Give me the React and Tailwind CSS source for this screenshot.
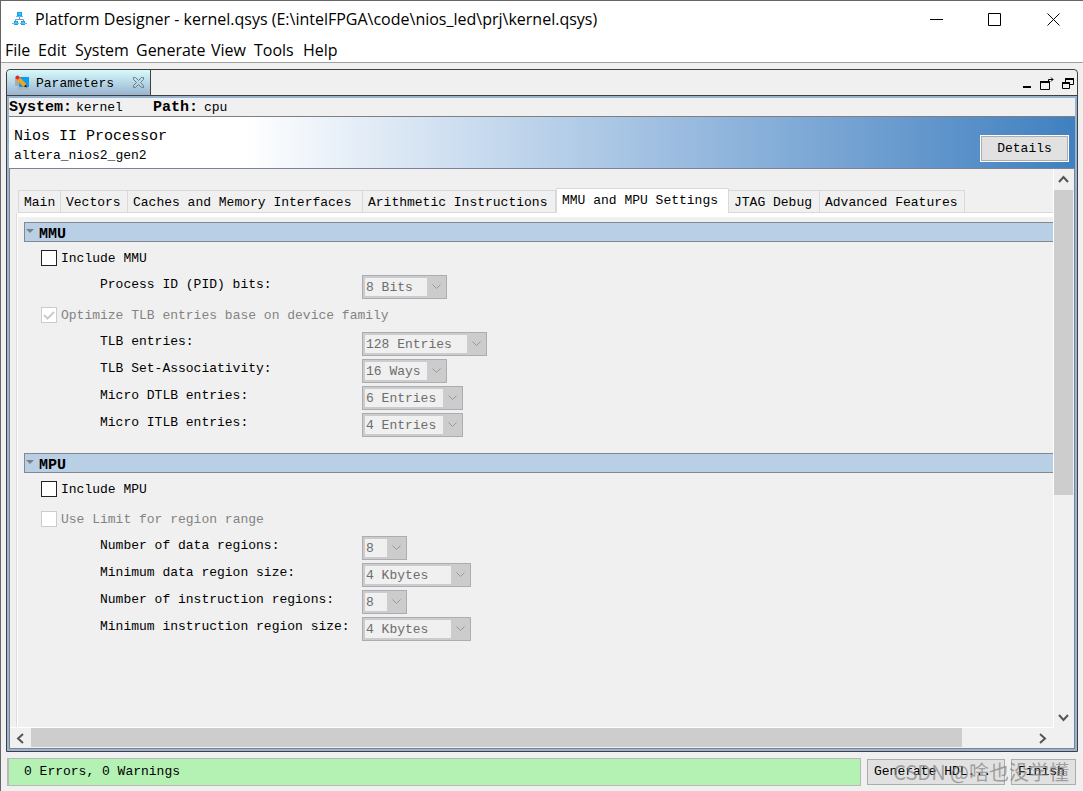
import React, { useState } from 'react';

const MENUS = [
    { name: 'File', width: 'w-[33px]' },
    { name: 'Edit', width: 'w-[37px]' },
    { name: 'System', width: 'w-[61px]' },
    { name: 'Generate', width: 'w-[75px]' },
    { name: 'View', width: 'w-[43px]' },
    { name: 'Tools', width: 'w-[49px]' },
    { name: 'Help', width: 'w-[40px]' },
];

const TABS = [
    { name: 'Main', width: 'w-[43px]' },
    { name: 'Vectors', width: 'w-[67px]' },
    { name: 'Caches and Memory Interfaces', width: 'w-[235px]' },
    { name: 'Arithmetic Instructions', width: 'w-[193px]' },
    { name: 'MMU and MPU Settings', width: 'w-[173px]' },
    { name: 'JTAG Debug', width: 'w-[91px]' },
    { name: 'Advanced Features', width: 'w-[145px]' },
];

const MMU_PID = [
    { id: 'pid', label: 'Process ID (PID) bits:', value: '8 Bits', width: 'w-[85px]' },
];

const MMU_TLB = [
    { id: 'tlb', label: 'TLB entries:', value: '128 Entries', width: 'w-[125px]' },
    { id: 'tlbWays', label: 'TLB Set-Associativity:', value: '16 Ways', width: 'w-[85px]' },
    { id: 'dtlb', label: 'Micro DTLB entries:', value: '6 Entries', width: 'w-[101px]' },
    { id: 'itlb', label: 'Micro ITLB entries:', value: '4 Entries', width: 'w-[101px]' },
];

const MPU_REGIONS = [
    { id: 'dataRegions', label: 'Number of data regions:', value: '8', width: 'w-[45px]' },
    { id: 'dataSize', label: 'Minimum data region size:', value: '4 Kbytes', width: 'w-[109px]' },
    { id: 'instRegions', label: 'Number of instruction regions:', value: '8', width: 'w-[45px]' },
    { id: 'instSize', label: 'Minimum instruction region size:', value: '4 Kbytes', width: 'w-[109px]' },
];

function AppIcon() {
    return (
        <svg width="15" height="14" viewBox="0 0 15 14" aria-hidden="true">
            <path d="M7.5 5v3M3.500 10V7.500h8v2.500" fill="none" stroke="#7c97b8" strokeWidth="1" />
            <rect x="5" y="0" width="5" height="4" fill="#0fa5ee" />
            <rect x="2" y="9" width="4" height="4" fill="#0fa5ee" />
            <rect x="9" y="9" width="4" height="4" fill="#0fa5ee" />
            <path d="M4 4.500h7M0 11.500h7M8 11.500h7" stroke="#5cbcf0" />
            <path d="M6.500 1.500h2v1h-2zM3.500 10h1v1h-1zM10.500 10h1v1h-1z" fill="#a5e2ff" />
        </svg>
    );
}

function ParametersIcon() {
    return (
        <svg width="15" height="16" viewBox="0 0 15 16" aria-hidden="true">
            <rect x="0" y="2" width="6" height="9" fill="#a9adb3" />
            <rect x="4" y="2" width="10" height="10" fill="#0b9cf2" />
            <rect x="2" y="12" width="12" height="3" fill="#b3b3b3" />
            <path d="M3 3.500l7 7" stroke="#f5a31a" strokeWidth="4" />
            <path d="M9 11.500l3 1-1-3z" fill="#222" />
            <circle cx="2.500" cy="2.500" r="2" fill="#e8272c" />
        </svg>
    );
}

function CloseTabIcon() {
    return (
        <svg width="11" height="11" viewBox="0 0 11 11" fill="none" stroke="#6d7c88" aria-hidden="true">
            <path d="M.5.5h2l3 3 3-3h2v2l-3 3 3 3v2h-2l-3-3-3 3h-2v-2l3-3-3-3z" />
        </svg>
    );
}

function Chevron({ dir, className }) {
    const paths = {
        up: 'M1 8l4.500-5L10 8',
        down: 'M1 3l4.500 5L10 3',
        left: 'M8 1L3 5.500 8 10',
        right: 'M3 1l5 4.500L3 10',
    };
    return (
        <svg width="11" height="11" viewBox="0 0 11 11" fill="none" stroke="currentColor" strokeWidth="2" className={className} aria-hidden="true">
            <path d={paths[dir]} />
        </svg>
    );
}

function TitleBar() {
    return (
        <div className="flex h-9 items-center bg-white pl-[11px] font-['Open_Sans','Noto_Sans',sans-serif] text-black">
            <AppIcon />
            <h1 className="ml-2 flex-1 whitespace-nowrap text-[16px]">
                Platform Designer - kernel.qsys (E:\intelFPGA\code\nios_led\prj\kernel.qsys)
            </h1>
            <button aria-label="Minimize" className="flex h-full w-[58px] items-center justify-center">
                <svg width="13" height="13" stroke="#000"><path d="M0 6.500h13" /></svg>
            </button>
            <button aria-label="Maximize" className="flex h-full w-[58px] items-center justify-center">
                <svg width="13" height="13" fill="none" stroke="#000"><path d="M.5.5h12v12H.5z" /></svg>
            </button>
            <button aria-label="Close" className="flex h-full w-[60px] items-center justify-center">
                <svg width="13" height="13" stroke="#000"><path d="M.5.5l12 12M12.500.5l-12 12" /></svg>
            </button>
        </div>
    );
}

function MenuBar() {
    return (
        <nav className="flex h-[26px] items-center border-b border-[#a0a0a0] bg-white pl-1 font-['Open_Sans','Noto_Sans',sans-serif] text-[16px] text-black">
            {MENUS.map((m) => (
                <button key={m.name} className={`${m.width} whitespace-nowrap text-left`}>{m.name}</button>
            ))}
        </nav>
    );
}

function PanelHeader() {
    return (
        <div className="flex h-[26px] border-b border-[#404040]">
            <div className="flex w-36 items-center rounded-tl border-r border-[#404040] bg-gradient-to-b from-[#d8fbfb] to-[#99b4d1] pl-2">
                <ParametersIcon />
                <span className="ml-[6px] flex-1 pt-[2px]">Parameters</span>
                <button aria-label="Close Parameters" className="mr-[6px]"><CloseTabIcon /></button>
            </div>
            <div className="flex flex-1 items-center justify-end gap-2 pr-[3px] pt-[2px]">
                <button aria-label="Minimize panel">
                    <svg width="9" height="13"><path d="M0 9h8v2H0z" /></svg>
                </button>
                <button aria-label="Detach panel">
                    <svg width="14" height="13" fill="none" stroke="#000">
                        <path d="M.5 5v7.500h9V5" />
                        <path d="M0 5h10" strokeWidth="2" />
                        <path d="M8.500 4V2.500H13M11 .5l2 2-2 2" />
                    </svg>
                </button>
                <button aria-label="Restore panel">
                    <svg width="12" height="13" fill="none" stroke="#000">
                        <path d="M3.500 5V2.500h8v5H8" />
                        <path d="M3 2h9" strokeWidth="2" />
                        <path d="M.5 5.500h7v6h-7z" />
                        <path d="M0 6h8" strokeWidth="2" />
                    </svg>
                </button>
            </div>
        </div>
    );
}

function Banner() {
    return (
        <div className="flex h-[52px] items-center border-b border-[#7a8494] bg-gradient-to-r from-white from-22% to-[#3f80c0] pl-[5px] pr-[6px]">
            <div className="flex-1 pt-[6px]">
                <h2 className="text-[15px] leading-5">Nios II Processor</h2>
                <p className="leading-[18px]">altera_nios2_gen2</p>
            </div>
            <button className="mt-3 h-[27px] w-[89px] border border-white bg-[#e1e1e1] p-0">
                <span className="flex h-full items-center justify-center border border-[#adadad]">Details</span>
            </button>
        </div>
    );
}

function Check({ id, label, checked, disabled, onChange }) {
    return (
        <div className="ml-[17px] flex h-4 items-center">
            <span className="relative flex">
                <input
                    id={id}
                    type="checkbox"
                    checked={checked}
                    disabled={disabled}
                    onChange={onChange}
                    className="size-4 appearance-none border border-[#222] bg-white disabled:border-[#ccc]"
                />
                {checked && (
                    <svg width="16" height="16" fill="none" stroke={disabled ? '#ccc' : '#222'} strokeWidth="2" className="pointer-events-none absolute inset-0" aria-hidden="true">
                        <path d="M3 8l3.500 3.500L13 5" />
                    </svg>
                )}
            </span>
            <label htmlFor={id} className={`ml-1 pt-[2px] ${disabled ? 'text-[#838383]' : ''}`}>{label}</label>
        </div>
    );
}

function Fields({ rows }) {
    return (
        <div className="mb-2 mt-[9px] flex flex-col gap-[3px] pl-[76px]">
            {rows.map((r) => (
                <div key={r.id} className="flex h-6 items-start">
                    <label htmlFor={r.id} className="w-[262px] whitespace-nowrap leading-5">{r.label}</label>
                    <div className={`${r.width} flex h-6 items-center border border-[#acacb4] bg-[#ccc] pl-[2px]`}>
                        <select id={r.id} disabled className="h-[18px] min-w-0 flex-1 appearance-none bg-[#f0f0f0] pl-[1px] text-[#6d6d6d] opacity-100">
                            <option>{r.value}</option>
                        </select>
                        <svg width="9" height="6" fill="none" stroke="#999" className="mx-[5px]" aria-hidden="true">
                            <path d="M.5.5l4 4 4-4" />
                        </svg>
                    </div>
                </div>
            ))}
        </div>
    );
}

function Section({ title, children }) {
    const [open, setOpen] = useState(true);
    return (
        <section className="mb-4">
            <button
                onClick={() => setOpen(!open)}
                aria-expanded={open}
                className="flex h-5 w-full border border-r-0 border-[#808890] bg-[#b8cfe5] pl-[1px] text-left"
            >
                <svg width="8" height="4" className="mt-[6px]" aria-hidden="true"><path d="M0 0h8L4 4z" fill="#7a8084" /></svg>
                <span className="ml-[5px] text-[15px] font-bold leading-6">{title}</span>
            </button>
            {open && <div className="pt-2">{children}</div>}
        </section>
    );
}

function SettingsPage() {
    const [mmu, setMmu] = useState(false);
    const [mpu, setMpu] = useState(false);
    return (
        <div className="ml-[6px] flex-1 border-l border-[#dcdcdc]">
            <div className="h-full border-l border-t-4 border-white pl-[6px] pt-[5px]">
                <Section title="MMU">
                    <Check id="mmu" label="Include MMU" checked={mmu} onChange={() => setMmu(!mmu)} />
                    <Fields rows={MMU_PID} />
                    <Check id="optimize" label="Optimize TLB entries base on device family" checked disabled />
                    <Fields rows={MMU_TLB} />
                </Section>
                <Section title="MPU">
                    <div className="flex flex-col gap-[14px]">
                        <Check id="mpu" label="Include MPU" checked={mpu} onChange={() => setMpu(!mpu)} />
                        <Check id="limit" label="Use Limit for region range" checked={false} disabled />
                    </div>
                    <Fields rows={MPU_REGIONS} />
                </Section>
            </div>
        </div>
    );
}

function TabStrip() {
    const [active, setActive] = useState('MMU and MPU Settings');
    return (
        <div role="tablist" className="flex h-11 items-end pl-2">
            {TABS.map((t, i) => (
                <button
                    key={t.name}
                    role="tab"
                    aria-selected={active === t.name}
                    onClick={() => setActive(t.name)}
                    className={`${t.width} shrink-0 whitespace-nowrap border-t border-[#d9d9d9] pl-[5px] text-left ${i === 0 ? 'border-l' : ''} ${active === t.name ? 'h-[25px] bg-white border-l border-r' : 'h-[23px] border-r border-b pt-[2px]'}`}
                >
                    {t.name}
                </button>
            ))}
            <div className="flex-1 border-b border-[#d9d9d9]" />
        </div>
    );
}

function StatusBar() {
    return (
        <footer className="relative flex h-[39px] items-start gap-[6px] pl-[6px] pr-[7px] pt-[6px]">
            <div className="flex h-7 flex-1 items-center border border-l-2 border-[#b8b8b8] bg-[#b4f2b4] pl-[15px]">
                0 Errors, 0 Warnings
            </div>
            <button className="mt-px h-[26px] w-[138px] border border-[#adadad] bg-[#e1e1e1] pl-[6px] text-left">Generate HDL...</button>
            <button className="mt-px h-[26px] w-[65px] border border-[#adadad] bg-[#e1e1e1] pl-[6px] text-left">Finish</button>
            <span className="pointer-events-none absolute right-[14px] top-1 whitespace-nowrap font-['Noto_Sans_CJK_SC',sans-serif] text-[20px] leading-8 text-[#808080]/70">
                CSDN @啥也没学懂
            </span>
        </footer>
    );
}

export default function App() {
    return (
        <div className="flex h-screen flex-col overflow-hidden border-l border-t border-[#666] bg-[#f0f0f0] font-['Liberation_Mono',monospace] text-[13px] text-black">
            <TitleBar />
            <MenuBar />
            <main className="ml-[5px] mr-[5px] mt-[6px] flex min-h-0 flex-1 flex-col rounded-t border border-[#404040]">
                <PanelHeader />
                <div className="flex min-h-0 flex-1 flex-col border-2 border-[#99b4d1]">
                    <div className="flex h-[19px] items-center border-b border-[#808080] pt-px leading-4">
                        <b className="w-[67px] text-[15px]">System:</b>
                        <span className="w-[77px]">kernel</span>
                        <b className="w-[51px] text-[15px]">Path:</b>
                        <span>cpu</span>
                    </div>
                    <Banner />
                    <div className="flex min-h-0 flex-1 flex-col border-x border-b border-[#7a8494]">
                        <div className="flex min-h-0 flex-1">
                            <div className="flex min-w-0 flex-1 flex-col overflow-hidden border-b border-r border-white">
                                <TabStrip />
                                <SettingsPage />
                            </div>
                            <div className="flex w-5 flex-col items-center pr-px text-[#555]">
                                <button aria-label="Scroll up" className="flex h-[21px] w-full shrink-0 items-center justify-center"><Chevron dir="up" /></button>
                                <div className="flex w-full flex-1 flex-col">
                                    <div className="h-[59%] w-full bg-[#cdcdcd]" />
                                </div>
                                <button aria-label="Scroll down" className="flex h-[21px] w-full shrink-0 items-center justify-center"><Chevron dir="down" /></button>
                            </div>
                        </div>
                        <div className="flex h-5 items-center pr-[21px] text-[#555]">
                            <button aria-label="Scroll left" className="flex w-[21px] shrink-0 items-center justify-center"><Chevron dir="left" /></button>
                            <div className="flex h-5 flex-1 pb-px">
                                <div className="h-full w-[93%] bg-[#cdcdcd]" />
                            </div>
                            <button aria-label="Scroll right" className="flex w-[21px] shrink-0 items-center justify-center"><Chevron dir="right" /></button>
                        </div>
                    </div>
                </div>
            </main>
            <StatusBar />
        </div>
    );
}
